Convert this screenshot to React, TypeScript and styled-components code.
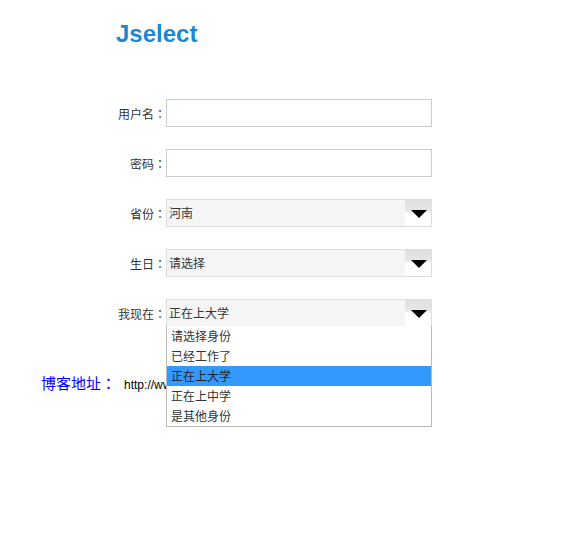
import styled, { createGlobalStyle } from "styled-components";

const GlobalStyle = createGlobalStyle`
  body {
    margin: 0;
    background: #fff;
    font-family: "Liberation Sans", "Noto Sans CJK SC", sans-serif;
    font-size: 12px;
    color: #333;
  }
`
const Page = styled.div`
  box-sizing: border-box;
  min-height: 558px;
  padding: 22px 0 0 41px;
`
const Title = styled.h1`
  margin: 0 0 53px 75px;
  font-family: "Liberation Sans", Arial, sans-serif;
  font-size: 24px;
  line-height: 24px;
  font-weight: 700;
  color: #1a87d2;
`
const Form = styled.div`
  display: flex;
  flex-flow: column;
  gap: 22px;
`
const Row = styled.div`
  display: grid;
  grid-template-columns: 125px 266px;
  align-items: center;
  height: 28px;
`
const Label = styled.label`
  text-align: right;
  font-family: "Noto Sans CJK SC", sans-serif;
  font-size: 12px;
  color: #333;
`
/* full-width colon centred in its box, as the reference draws it */
const Colon = styled.span`
  font-family: "Noto Sans CJK TC", sans-serif;
`
const Input = styled.input`
  box-sizing: border-box;
  width: 266px;
  height: 28px;
  margin: 0;
  border: 1px solid #ccc;
  background: #fff;
  outline: none;
`
const Select = styled.div`
  position: relative;
  box-sizing: border-box;
  width: 266px;
  height: 28px;
  border: 1px solid #ddd;
  background: #f5f5f5;
`
const Value = styled.span`
  display: block;
  padding-left: 2px;
  line-height: 26px;
  font-family: "Noto Sans CJK SC", sans-serif;
  font-size: 12px;
  color: #333;
`
const ArrowBox = styled.span`
  position: absolute;
  top: 0;
  right: 0;
  width: 26px;
  height: 26px;
  background: linear-gradient(to bottom, #e0e0e0 0%, #e6e6e6 40%, #fff 52%, #fff 100%);
  display: flex;
  align-items: center;
  justify-content: center;

  &::after {
    content: "";
    margin: 1px 0 0 2px;
    border-left: 8px solid transparent;
    border-right: 8px solid transparent;
    border-top: 8px solid #000;
  }
`
const Options = styled.ul`
  position: absolute;
  top: 100%;
  left: -1px;
  z-index: 2;
  box-sizing: border-box;
  width: 266px;
  margin: 0;
  padding: 0;
  list-style: none;
  background: #fff;
  border: 1px solid #bbb;
  border-top: none;
`
const Option = styled.li<{ $active?: boolean }>`
  height: 20px;
  line-height: 20px;
  padding-left: 4px;
  font-family: "Noto Sans CJK SC", sans-serif;
  font-size: 12px;
  color: ${({ $active }) => ($active ? "#222" : "#333")};
  background: ${({ $active }) => ($active ? "#3399ff" : "#fff")};
`
const Blog = styled.p`
  margin: 46px 0 0;
  line-height: 20px;
  white-space: nowrap;
`
const BlogLabel = styled.span`
  font-family: "Noto Sans CJK SC", sans-serif;
  font-size: 15px;
  color: #00f;
`
const BlogLink = styled.span`
  margin-left: 8px;
  font-family: "Liberation Sans", Arial, sans-serif;
  font-size: 12px;
  color: #000;
`

const identities = ["请选择身份", "已经工作了", "正在上大学", "正在上中学", "是其他身份"]

export default function App() {
  return (
    <Page>
      <GlobalStyle />
      <Title>Jselect</Title>
      <Form>
        <Row>
          <Label>用户名<Colon>：</Colon></Label>
          <Input type="text" />
        </Row>
        <Row>
          <Label>密码<Colon>：</Colon></Label>
          <Input type="password" />
        </Row>
        <Row>
          <Label>省份<Colon>：</Colon></Label>
          <Select>
            <Value>河南</Value>
            <ArrowBox />
          </Select>
        </Row>
        <Row>
          <Label>生日<Colon>：</Colon></Label>
          <Select>
            <Value>请选择</Value>
            <ArrowBox />
          </Select>
        </Row>
        <Row>
          <Label>我现在<Colon>：</Colon></Label>
          <Select>
            <Value>正在上大学</Value>
            <ArrowBox />
            <Options>
              {identities.map((item) => (
                <Option key={item} $active={item === "正在上大学"}>{item}</Option>
              ))}
            </Options>
          </Select>
        </Row>
      </Form>
      <Blog>
        <BlogLabel>博客地址<Colon>：</Colon></BlogLabel>
        <BlogLink>http://www.cnblogs.com/jselect</BlogLink>
      </Blog>
    </Page>
  )
}
